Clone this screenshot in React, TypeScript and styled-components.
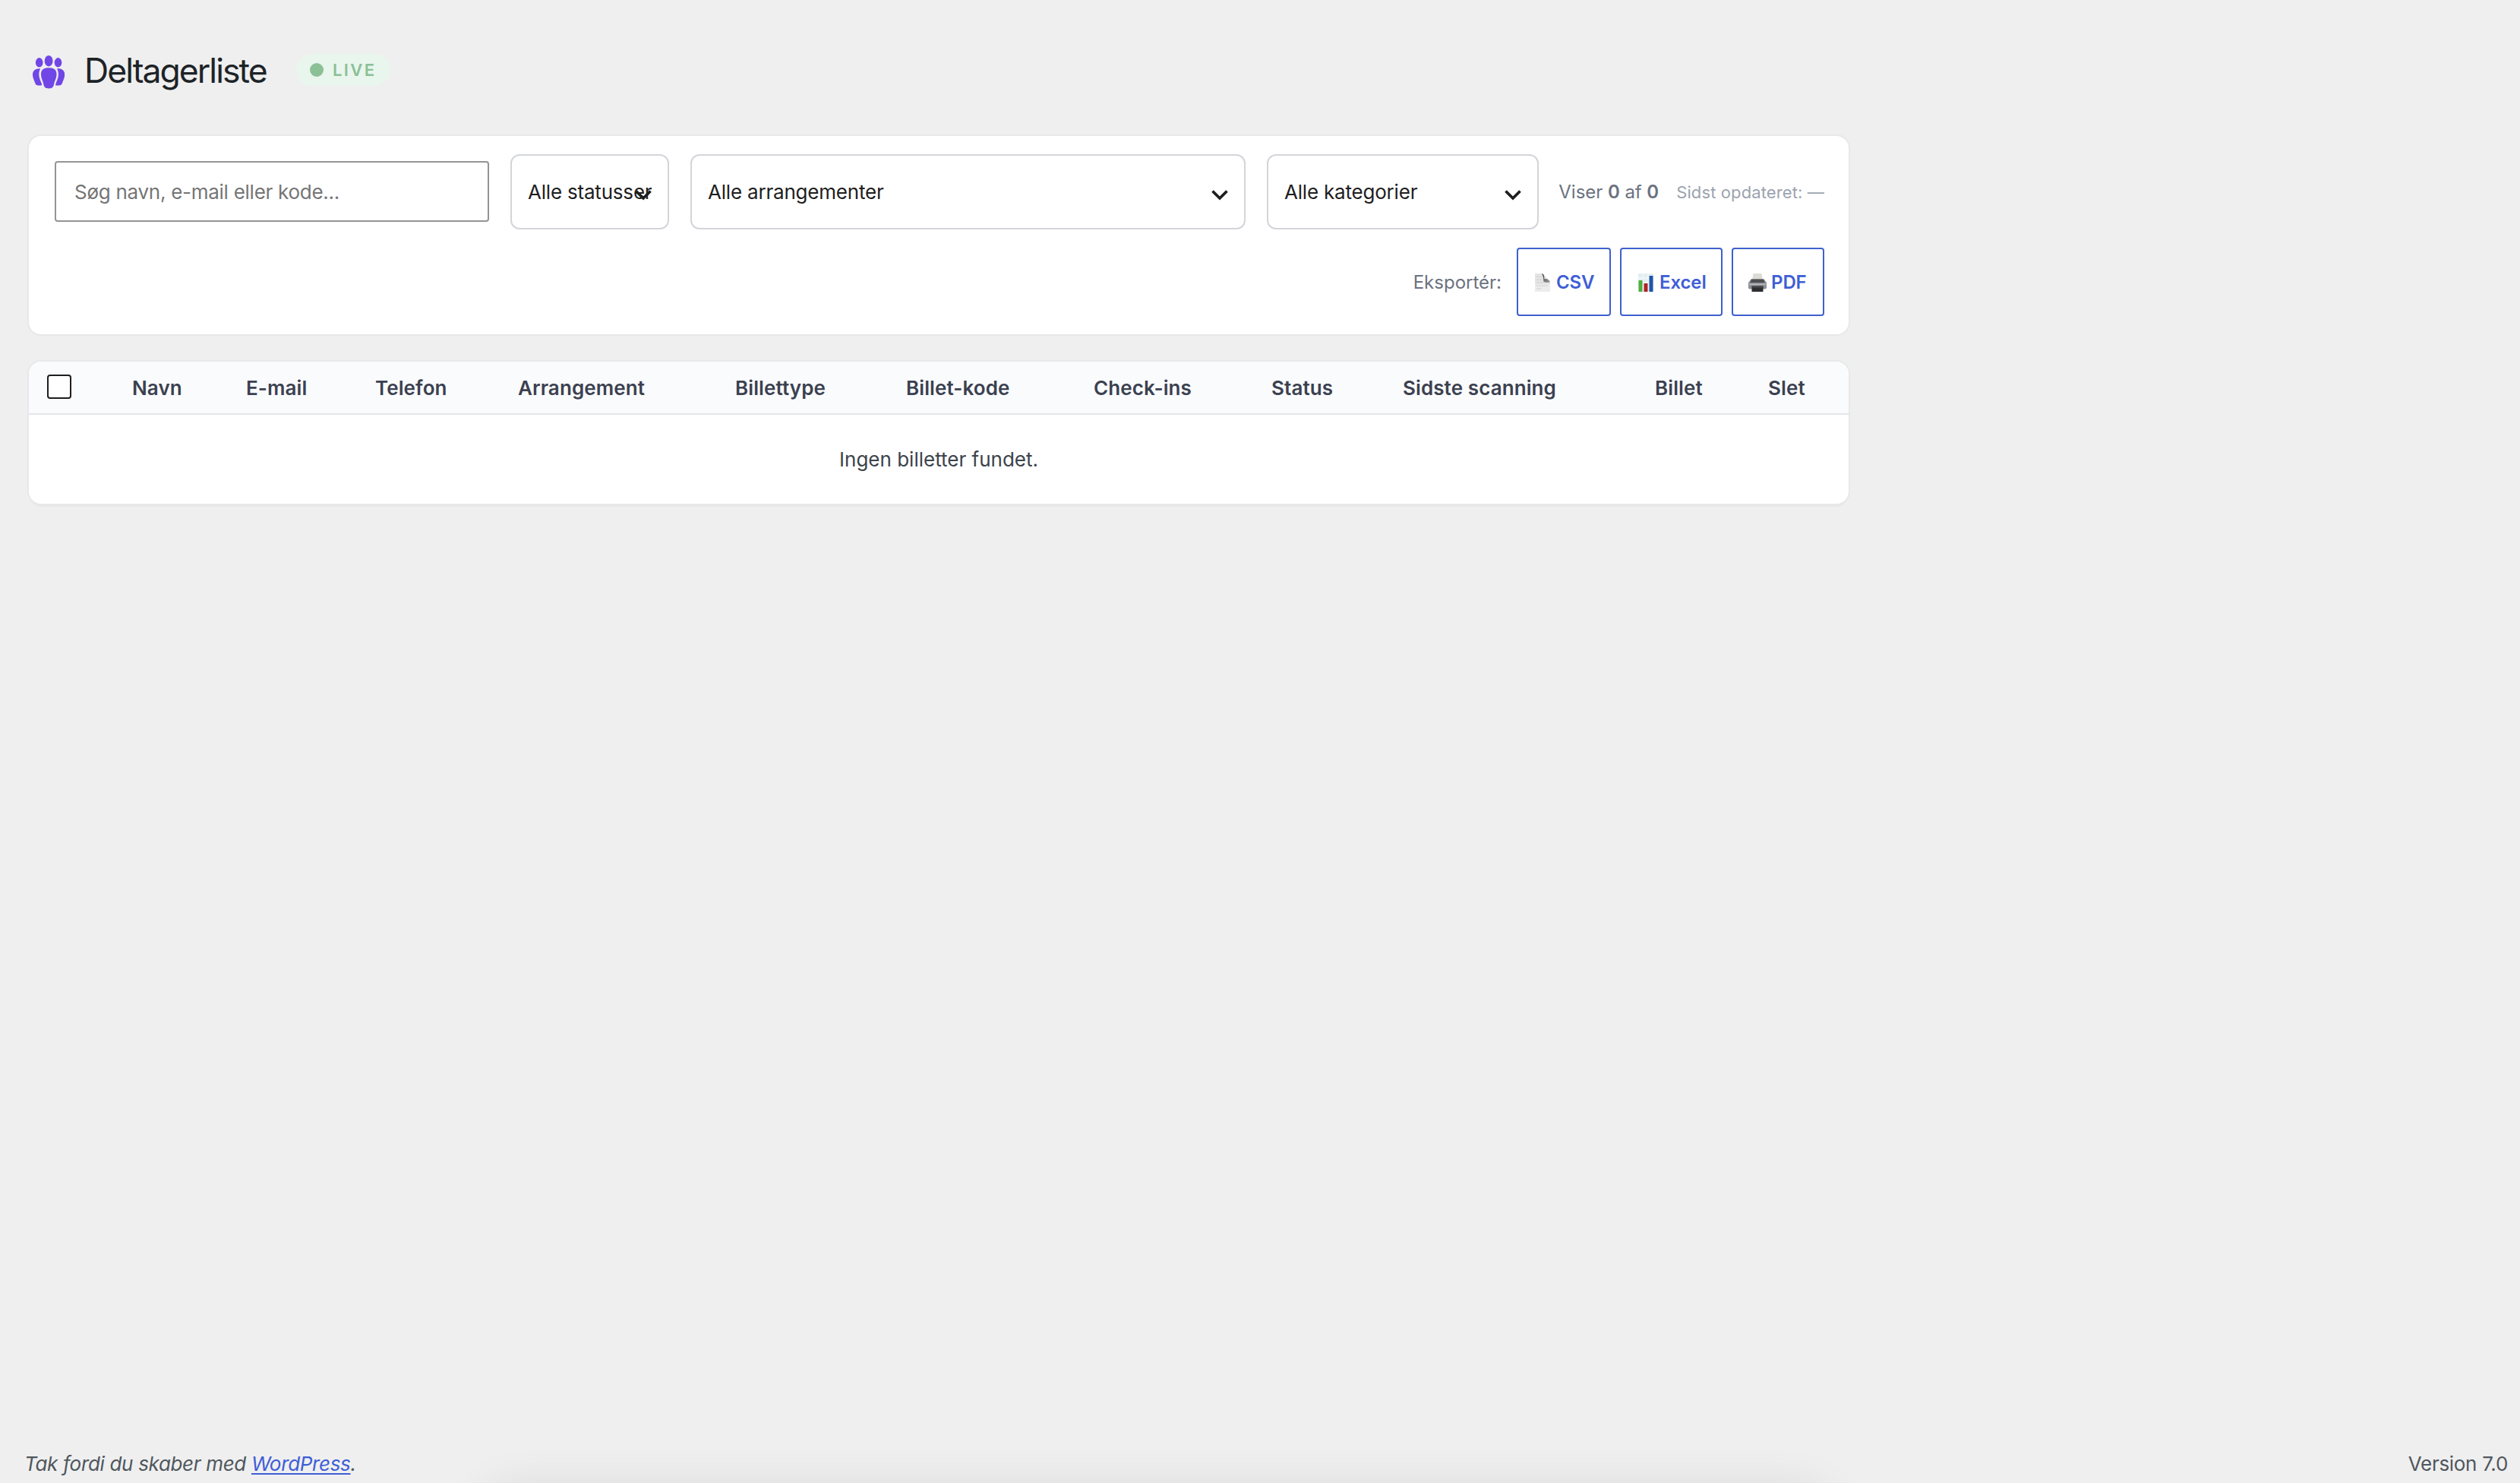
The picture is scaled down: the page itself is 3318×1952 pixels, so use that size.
import React from 'react';
import styled, { createGlobalStyle } from 'styled-components';

const GlobalStyle = createGlobalStyle`
  *, *::before, *::after { box-sizing: border-box; }
  body {
    margin: 0;
    background: #efefef;
    font-family: Inter, "Liberation Sans", sans-serif;
    font-size: 26px;
    line-height: 32px;
    color: #3c434a;
  }
`;

const Page = styled.div`
  position: relative;
  display: flex;
  flex-direction: column;
  height: 1952px;
  overflow: hidden;
`;

const Main = styled.main`
  width: 2434px;
  padding-left: 38px;
`;

const Header = styled.header`
  display: flex;
  align-items: center;
  height: 130px;
  margin-bottom: 49px;
  padding: 56px 0 0 5px;
`;

const GroupIcon = styled.svg`
  width: 42px;
  height: 44px;
  margin: 3px 26px 0 0;
  fill: #7047e6;
`;

const Title = styled.h1`
  flex: 0 0 279px;
  margin: 0;
  font-size: 44.5px;
  font-weight: 400;
  line-height: 56px;
  letter-spacing: -1.95px;
  white-space: nowrap;
  color: #1d2327;
`;

const LiveBadge = styled.span`
  display: flex;
  align-items: center;
  gap: 12px;
  width: 124px;
  height: 42px;
  margin-bottom: 2px;
  padding-left: 18px;
  border-radius: 21px;
  background: #e8f6ee;
  color: #8cc096;
  font-size: 22px;
  font-weight: 600;
  letter-spacing: 2.4px;

  &::before {
    content: '';
    width: 18px;
    height: 18px;
    border-radius: 50%;
    background: #8cc096;
  }
`;

const Card = styled.section`
  border-radius: 16px;
  background: #fff;
`;

const Toolbar = styled(Card)`
  display: flex;
  flex-direction: column;
  gap: 24px;
  height: 261px;
  padding: 24px 32px 24px 34px;
  box-shadow: 0 0 0 2px #e8e8e8;
`;

const FilterRow = styled.div`
  display: flex;
  align-items: center;
  gap: 28px;
  height: 99px;
`;

const SearchInput = styled.input`
  flex: none;
  width: 572px;
  height: 80px;
  margin-bottom: 1px;
  padding: 1px 23px 0 24px;
  border: 2px solid #949494;
  border-radius: 4px;
  background: #fff;
  font: inherit;
  letter-spacing: -0.27px;

  &::placeholder {
    color: #757575;
    opacity: 1;
  }
`;

const SelectBox = styled.div<{ $width: number }>`
  position: relative;
  display: flex;
  flex: none;
  align-items: center;
  width: ${(p) => p.$width}px;
  height: 99px;
  padding-left: 21px;
  border: 2px solid #d3d5d9;
  border-radius: 12px;
  color: #1e1e1e;
  letter-spacing: -0.2px;
  white-space: nowrap;
`;

const Chevron = styled.svg`
  position: absolute;
  top: 45px;
  right: 21px;
  width: 22px;
  height: 14px;
  fill: none;
  stroke: #1e1e1e;
  stroke-width: 3.7;
`;

const Meta = styled.div`
  display: flex;
  flex: 1;
  justify-content: flex-end;
  align-items: center;
  gap: 23px;
  margin-left: -6px;
  white-space: nowrap;
`;

const Count = styled.span`
  font-size: 24px;
  letter-spacing: -0.05px;
  color: #6b7280;

  strong { font-weight: 600; }
`;

const Updated = styled.span`
  font-size: 22px;
  letter-spacing: 0.12px;
  color: #9ca3af;
`;

const ExportRow = styled.div`
  display: flex;
  justify-content: flex-end;
  align-items: center;
  gap: 12px;
  height: 90px;
`;

const ExportLabel = styled.span`
  margin: 1px 8px 0 0;
  font-size: 24px;
  color: #6b7280;
`;

const ExportButton = styled.button<{ $width: number }>`
  display: flex;
  align-items: center;
  gap: 6px;
  width: ${(p) => p.$width}px;
  height: 90px;
  padding: 1px 0 0 20px;
  border: 2px solid #3f60cd;
  border-radius: 4px;
  background: #fff;
  color: #3f5ed6;
  font: inherit;
  font-size: 24px;
  font-weight: 600;
  letter-spacing: -0.1px;

  svg {
    flex: none;
    width: 24px;
    height: 24px;
  }
`;

const TableCard = styled(Card)`
  height: 187px;
  margin-top: 36px;
  overflow: hidden;
  box-shadow: 0 0 0 2px #e7e8e9, 0 5px 0 -1px #e7e7e7;
`;

const Table = styled.table`
  width: 2396px;
  border-collapse: separate;
  border-spacing: 0;
  table-layout: fixed;
`;

const HeadCell = styled.th<{ $width: number }>`
  width: ${(p) => p.$width}px;
  height: 70px;
  padding: 2px 0 0 17px;
  border-bottom: 2px solid #e5e6ea;
  background: #fafbfd;
  color: #3b4150;
  font-weight: 600;
  letter-spacing: 0.1px;
  text-align: left;
  white-space: nowrap;
`;

const CheckCell = styled(HeadCell)`
  padding: 0 0 0 24px;
`;

const Checkbox = styled.input`
  display: block;
  appearance: none;
  width: 32px;
  height: 32px;
  margin: 0 0 3px;
  border: 2px solid #1e1e1e;
  border-radius: 4px;
  background: #fff;
`;

const EmptyCell = styled.td`
  height: 117px;
  padding: 0;
  text-align: center;
`;

const Footer = styled.footer`
  display: flex;
  justify-content: space-between;
  margin-top: auto;
  padding: 0 16px 9px 32px;
  color: #50575e;
  letter-spacing: -0.3px;
`;

const Thanks = styled.em`
  letter-spacing: -0.33px;
`;

const Link = styled.a`
  color: #3f5ed6;
  text-decoration: underline;
  text-decoration-thickness: 2px;
  text-underline-offset: 3px;
  text-decoration-skip-ink: none;
`;

const BottomShade = styled.div`
  position: absolute;
  top: 1958px;
  left: 640px;
  width: 1765px;
  height: 80px;
  border-radius: 30px;
  box-shadow: 0 0 60px rgba(0, 0, 0, 0.09);
  pointer-events: none;
`;

const selects = [
  { label: 'Alle statusser', width: 209 },
  { label: 'Alle arrangementer', width: 731 },
  { label: 'Alle kategorier', width: 358 },
];

const columns = [
  { label: 'Navn', width: 150 },
  { label: 'E-mail', width: 170 },
  { label: 'Telefon', width: 188 },
  { label: 'Arrangement', width: 286 },
  { label: 'Billettype', width: 225 },
  { label: 'Billet-kode', width: 247 },
  { label: 'Check-ins', width: 234 },
  { label: 'Status', width: 173 },
  { label: 'Sidste scanning', width: 332 },
  { label: 'Billet', width: 149 },
  { label: 'Slet', width: 123 },
];

const PageGlyph = () => (
  <svg viewBox="0 0 24 24">
    <defs>
      <linearGradient id="fold" x1="0" y1="0" x2="1" y2="1">
        <stop offset="0" stopColor="#333" />
        <stop offset="1" stopColor="#a8a8a8" />
      </linearGradient>
    </defs>
    <path d="M2 0h10.5l9.5 11v13H2z" fill="#e4e4e4" />
    <path d="M2 14h20v10H2z" fill="#ececec" />
    <path d="M4 4h7M4 8h8M4 12h9M4 16h15M4 20h6" stroke="#d2d2d2" strokeWidth="1" />
    <path d="M11 0c3 1 3.6 4 3.2 7.2C17.500 6.600 21 8 22 11.300 19 12.500 15.500 12 13.400 10.800 13.200 7 13 3 11 0z" fill="url(#fold)" />
  </svg>
);

const ChartGlyph = () => (
  <svg viewBox="0 0 24 24">
    <path d="M2 0h20v24H2z" fill="#e3eef2" />
    <path d="M2 6h20M2 12h20M2 18h20M8.500 0v24M15 0v24" stroke="#f5f9fa" strokeWidth="1" />
    <path d="M2.500 9h5v15h-5z" fill="#4faf3c" />
    <path d="M9.500 13h5v11h-5z" fill="#ad2424" />
    <path d="M16.500 3h5v21h-5z" fill="#1f56a8" />
  </svg>
);

const PrinterGlyph = () => (
  <svg viewBox="0 0 24 24">
    <path d="M6.500 0h11L19 9H5z" fill="#dcdbd7" />
    <path d="M3.500 7.500h17L24 12v6.500a2 2 0 0 1-2 2H2a2 2 0 0 1-2-2V12z" fill="#8d9094" />
    <path d="M4 7.500h16l1.500 4.500h-19z" fill="#4d4f52" />
    <path d="M1 14.300h22" stroke="#b9bcc0" strokeWidth="1.500" />
    <path d="M4.500 16.500h15V24h-15z" fill="#2d2e30" />
    <path d="M5.500 18h13" stroke="#55575a" strokeWidth="1" />
  </svg>
);

const exportsList = [
  { label: 'CSV', width: 124, Glyph: PageGlyph },
  { label: 'Excel', width: 135, Glyph: ChartGlyph },
  { label: 'PDF', width: 122, Glyph: PrinterGlyph },
];

export default function App() {
  return (
    <>
      <GlobalStyle />
      <Page>
        <Main>
          <Header>
            <GroupIcon viewBox="0 0 42 44">
              <ellipse cx="21.100" cy="7.200" rx="5.400" ry="7.200" />
              <ellipse cx="8.700" cy="9.300" rx="4.800" ry="6.200" />
              <ellipse cx="33.500" cy="9.300" rx="4.800" ry="6.200" />
              <path d="M21.200 16.300c4.800 0 10.300 1.300 10.300 8.200 0 6-2.600 8.500-3.700 14.500-.7 3.300-3.200 4.400-6.600 4.400s-5.900-1.100-6.600-4.400C13.500 33 11 30.500 11 24.500c0-6.900 5.400-8.200 10.200-8.200z" />
              <path id="arm" d="M10.200 17.200C4 16.800 0 19.500 0 25.200c0 4.300 2 7.300 3.300 11.300.8 2.300 2 3 4.200 3H11c1 0 1.300-.7 1-1.700-1-3.900-3.700-7.800-3.700-12.600 0-3.200.6-5.500 1.900-8z" />
              <use href="#arm" transform="translate(42.200 0) scale(-1 1)" />
            </GroupIcon>
            <Title>Deltagerliste</Title>
            <LiveBadge>LIVE</LiveBadge>
          </Header>

          <Toolbar>
            <FilterRow>
              <SearchInput placeholder="Søg navn, e-mail eller kode..." />
              {selects.map((s) => (
                <SelectBox key={s.label} $width={s.width}>
                  {s.label}
                  <Chevron viewBox="0 0 22 14">
                    <path d="M1.500 1.500 11 11l9.500-9.500" />
                  </Chevron>
                </SelectBox>
              ))}
              <Meta>
                <Count>
                  Viser <strong>0</strong> af <strong>0</strong>
                </Count>
                <Updated>Sidst opdateret: —</Updated>
              </Meta>
            </FilterRow>
            <ExportRow>
              <ExportLabel>Eksportér:</ExportLabel>
              {exportsList.map(({ label, width, Glyph }) => (
                <ExportButton key={label} $width={width}>
                  <Glyph />
                  {label}
                </ExportButton>
              ))}
            </ExportRow>
          </Toolbar>

          <TableCard>
            <Table>
              <thead>
                <tr>
                  <CheckCell $width={119}>
                    <Checkbox type="checkbox" />
                  </CheckCell>
                  {columns.map((c) => (
                    <HeadCell key={c.label} $width={c.width}>
                      {c.label}
                    </HeadCell>
                  ))}
                </tr>
              </thead>
              <tbody>
                <tr>
                  <EmptyCell colSpan={12}>Ingen billetter fundet.</EmptyCell>
                </tr>
              </tbody>
            </Table>
          </TableCard>
        </Main>

        <Footer>
          <Thanks>
            Tak fordi du skaber med <Link href="#">WordPress</Link>.
          </Thanks>
          <span>Version 7.0</span>
        </Footer>
        <BottomShade />
      </Page>
    </>
  );
}
